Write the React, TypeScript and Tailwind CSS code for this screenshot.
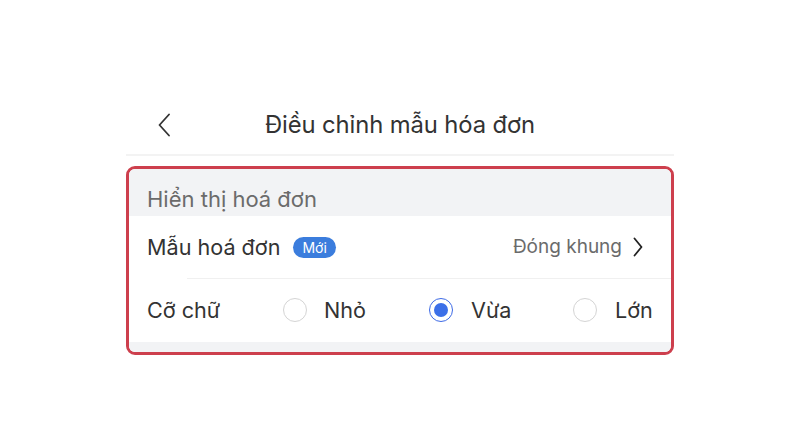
export default function App() {
  return (
    <div
      className="w-[800px] h-[448px] bg-white flex justify-center"
      style={{ fontFamily: "Inter, 'Noto Sans', sans-serif" }}
    >
      <div className="w-[548px] mt-[95px] flex flex-col">
        {/* Header */}
        <div className="relative h-[59px] flex items-center justify-center">
          <svg
            className="absolute left-[32px] top-[18px]"
            width="12"
            height="24"
            viewBox="0 0 12 24"
            fill="none"
          >
            <path d="M11 1.5 L1.5 12 L11 22.5" stroke="#333" strokeWidth="1.8" strokeLinecap="round" strokeLinejoin="round" />
          </svg>
          <span className="text-[23.8px] text-[#333] tracking-[-0.1px]">Điều chỉnh mẫu hóa đơn</span>
        </div>
        <div className="h-[2px] bg-[#f3f3f3]" />
        {/* Card */}
        <div className="mt-[10px] border-[3px] border-[#cd3f4d] rounded-[9px] overflow-hidden flex flex-col">
          <div className="h-[47px] bg-[#f2f3f5] flex items-center pl-[18px] pt-[13px]">
            <span className="text-[22px] text-[#6b6b6b]">Hiển thị hoá đơn</span>
          </div>
          <div className="h-[62px] flex items-center pl-[18px] pr-[28px]">
            <span className="text-[21.6px] text-[#333]">Mẫu hoá đơn</span>
            <span className="ml-[13px] h-[21px] px-[9px] rounded-full bg-[#3b7ddd] text-white text-[14px] flex items-center">Mới</span>
            <span className="ml-auto text-[19px] text-[#6b6b6b]">Đóng khung</span>
            <svg className="ml-[11px]" width="10" height="20" viewBox="0 0 10 20" fill="none">
              <path d="M1.5 1.5 L8.5 10 L1.5 18.5" stroke="#222" strokeWidth="1.8" strokeLinecap="round" strokeLinejoin="round" />
            </svg>
          </div>
          <div className="h-px bg-[#f0f0f0] ml-[58px]" />
          <div className="h-[63px] flex items-center pl-[18px]">
            <span className="w-[136px] text-[21.6px] text-[#333]">Cỡ chữ</span>
            <div className="w-[146px] flex items-center gap-[17px]">
              <span className="w-[24px] h-[24px] rounded-full border border-[#d4d4d4]" />
              <span className="text-[21.6px] text-[#333]">Nhỏ</span>
            </div>
            <div className="w-[144px] flex items-center gap-[18px]">
              <span className="w-[24px] h-[24px] rounded-full border-[1.5px] border-[#3d6ae6] flex items-center justify-center">
                <span className="w-[14px] h-[14px] rounded-full bg-[#3b6fe8]" />
              </span>
              <span className="text-[21.6px] text-[#333]">Vừa</span>
            </div>
            <div className="flex items-center gap-[18px]">
              <span className="w-[24px] h-[24px] rounded-full border border-[#d4d4d4]" />
              <span className="text-[21.6px] text-[#333]">Lớn</span>
            </div>
          </div>
          <div className="h-[10px] bg-[#f2f3f5]" />
        </div>
      </div>
    </div>
  );
}
